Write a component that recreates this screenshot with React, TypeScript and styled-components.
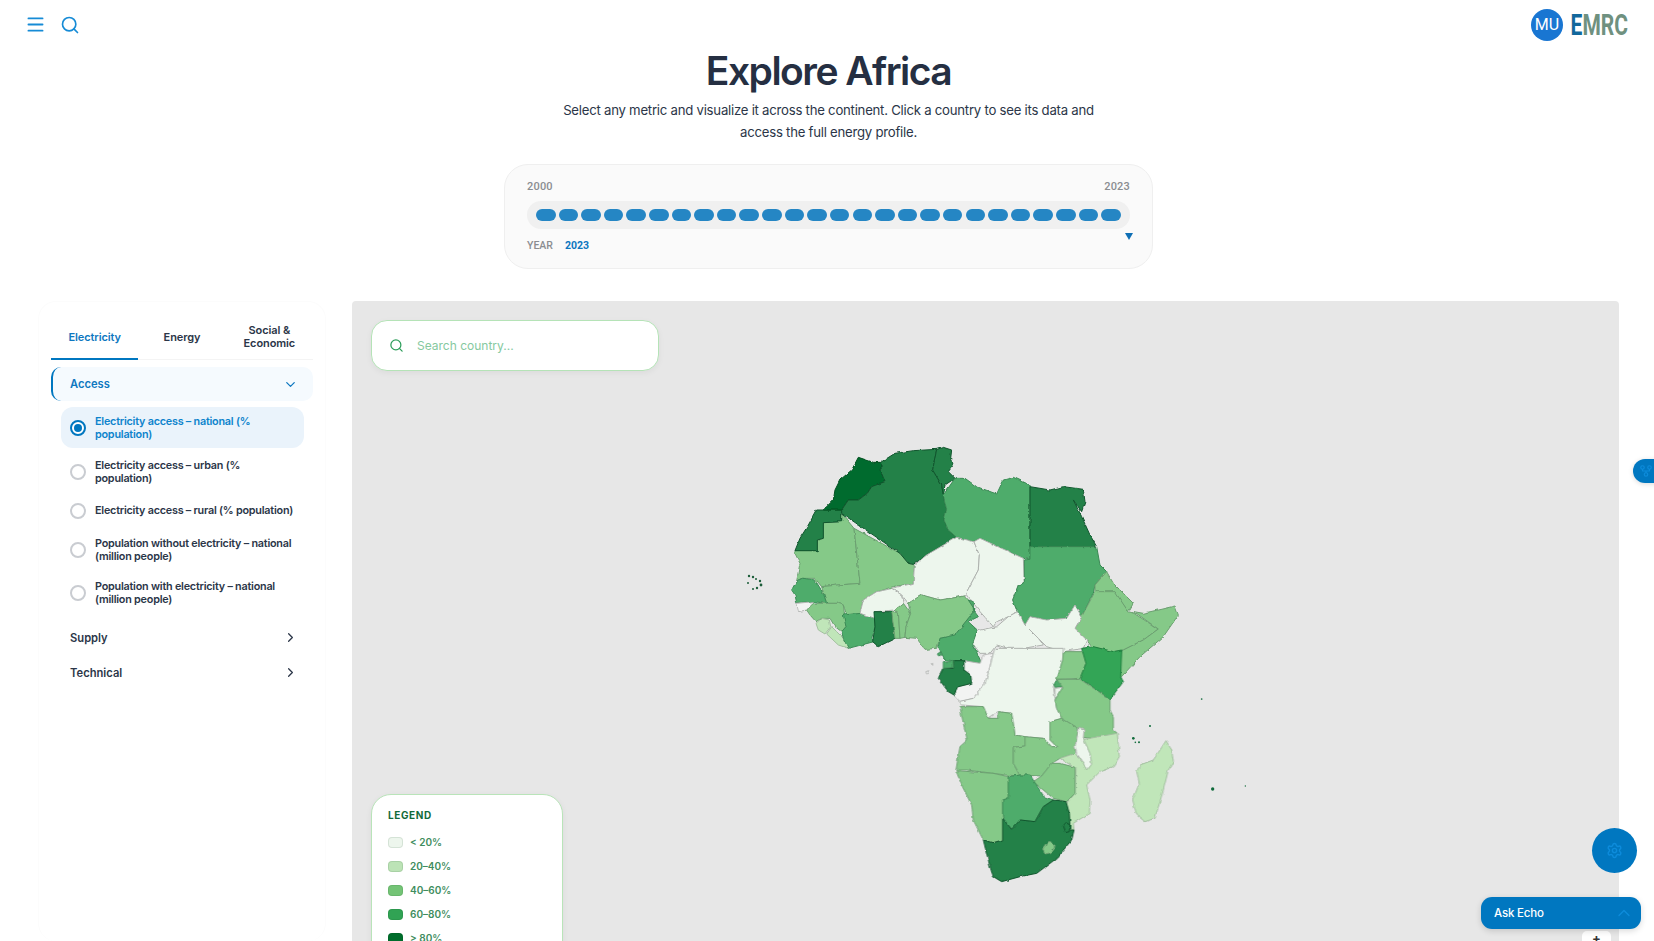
import React from "react";
import styled, { createGlobalStyle } from "styled-components";
import { Menu, Search, ChevronDown, ChevronRight, ChevronUp, Settings, GitFork } from "lucide-react";

const Global = createGlobalStyle`
  html, body { margin: 0; padding: 0; height: 100%; background: #fff; overflow: hidden; }
  body { font-family: Inter, "Noto Sans", sans-serif; color: #1f2a3c; }
  #root { height: 100%; }
`;

const Page = styled.div`
  width: 1654px; height: 941px; display: flex; flex-direction: column; overflow: hidden; position: relative;
`;
const Header = styled.header`
  height: 49px; flex: none; display: flex; align-items: center; justify-content: space-between;
  padding: 0 26px 0 25px; box-sizing: border-box;
`;
const HeaderLeft = styled.div`display: flex; align-items: center; gap: 14px; color: #168bd6; svg { display: block; }`;
const HeaderRight = styled.div`display: flex; align-items: center; gap: 7px;`;
const Avatar = styled.div`
  width: 32px; height: 32px; border-radius: 50%; background: #1976d2; color: #fff;
  display: flex; align-items: center; justify-content: center; font-size: 16px; font-family: Roboto, sans-serif;
`;
const Logo = styled.div`
  width: 58px; display: flex; justify-content: flex-end; white-space: nowrap;
  font-family: Roboto, sans-serif; font-weight: 700; font-size: 25px; color: #6f9180;
  transform: scale(.84, 1.18); transform-origin: right center;
  b { color: #12689c; font-weight: 700; }
`;
const Hero = styled.section`
  flex: none; display: flex; flex-direction: column; align-items: center; padding-left: 3px;
`;
const Title = styled.h1`
  margin: -1px 0 0; font-size: 39px; line-height: 46px; font-weight: 600; letter-spacing: -1.5px; color: #252f42;
`;
const Subtitle = styled.p`
  margin: 5px 0 0; width: 540px; text-align: center; font-size: 13.2px; line-height: 22px; color: #2b3648; letter-spacing: -.25px;
`;
const TimelineCard = styled.div`
  margin-top: 21px; width: 649px; height: 105px; box-sizing: border-box; padding: 15px 22px 0 22px;
  border: 1px solid #efefef; border-radius: 24px; background: #fafafa; position: relative;
`;
const YearEnds = styled.div`
  display: flex; justify-content: space-between; font: 500 11px/14px Roboto, sans-serif; color: #8a8d91; letter-spacing: .2px;
`;
const Track = styled.div`
  margin-top: 7px; height: 28px; border-radius: 14px; background: #f0f0f0; display: flex; align-items: center;
  justify-content: space-between; padding: 0 9px;
`;
const Pill = styled.span`width: 19.5px; height: 12px; border-radius: 6px; background: #2586c4;`;
const Marker = styled.span`
  position: absolute; right: 19px; top: 68px; width: 0; height: 0;
  border-left: 4.5px solid transparent; border-right: 4.5px solid transparent; border-top: 7px solid #0f6fb5;
`;
const YearRow = styled.div`
  margin-top: 10px; display: flex; gap: 12px; font: 500 10.5px/14px Roboto, sans-serif; color: #8a8d91;
  strong { color: #0d77c0; font-weight: 700; }
`;
const Content = styled.main`
  flex: 1; min-height: 0; margin-top: 32px; display: flex; padding: 0 35px 0 38px; gap: 26px; 
`;
const Sidebar = styled.aside`
  width: 288px; flex: none; box-sizing: border-box; padding: 14px 12px 0 12px;
  border: 1px solid #fcfcfc; border-radius: 18px; border-bottom: 0;
`;
const Tabs = styled.div`display: grid; grid-template-columns: repeat(3, 1fr); border-bottom: 1px solid #f4f4f4;`;
const Tab = styled.div<{ $active?: boolean }>`
  height: 42px; display: flex; align-items: center; justify-content: center; text-align: center; font-size: 11px; line-height: 13px;
  font-weight: 600; letter-spacing: -.1px; color: ${p => (p.$active ? "#0d77c0" : "#2b3648")};
  border-bottom: 2px solid ${p => (p.$active ? "#0077c0" : "transparent")}; margin-bottom: -1px;
`;
const GroupHead = styled.div<{ $open?: boolean }>`
  height: ${p => (p.$open ? "34px" : "35px")}; margin-top: ${p => (p.$open ? "7px" : "0")}; display: flex; align-items: center; justify-content: space-between;
  padding: 0 15px 0 ${p => (p.$open ? "17px" : "19px")}; border-radius: 10px; font-size: 11.2px; font-weight: 600;
  color: ${p => (p.$open ? "#0d77c0" : "#2b3648")};
  background: ${p => (p.$open ? "#f5fafe" : "transparent")};
  border-left: ${p => (p.$open ? "2px solid #0077c0" : "0")};
`;
const Options = styled.div`padding: 6px 9px 0 10px; margin-bottom: 6px;`;
const Option = styled.div<{ $active?: boolean; $h: number; $gap?: number }>`
  display: flex; align-items: center; gap: 9px; padding: 0 2px 0 9px; height: ${p => p.$h}px; border-radius: 12px;
  margin-top: ${p => p.$gap ?? 0}px; white-space: pre-line;
  font-size: 10.8px; line-height: 13.5px; font-weight: 600; letter-spacing: -.22px;
  color: ${p => (p.$active ? "#0d83cc" : "#2b3648")};
  background: ${p => (p.$active ? "#eaf3fb" : "transparent")};
`;
const OptionLabel = styled.span`padding-top: 1px;`;
const Radio = styled.span<{ $active?: boolean }>`
  width: 16px; height: 16px; flex: none; border-radius: 50%; box-sizing: border-box; background: #fff;
  border: 2px solid ${p => (p.$active ? "#0077c0" : "#c9ccd1")}; display: flex; align-items: center; justify-content: center;
  &::after { content: ""; width: 8px; height: 8px; border-radius: 50%; background: ${p => (p.$active ? "#0077c0" : "transparent")}; }
`;
const MapPanel = styled.section`
  flex: 1; position: relative; background: #e7e7e7; border-radius: 4px 4px 0 0; overflow: hidden;
`;
const MapSvg = styled.svg`position: absolute; left: 0; top: 0; width: 1267px; height: 640px;`;
const CountrySearch = styled.div`
  position: absolute; left: 19px; top: 19px; width: 288px; height: 51px; box-sizing: border-box; background: #fff;
  border: 1px solid #b5e3b7; border-radius: 16px; box-shadow: 0 2px 6px rgba(0,0,0,.05);
  display: flex; align-items: center; gap: 13px; padding-left: 17px; color: #2e9e5b; font-size: 12px;
  span { color: #86c9a0; }
`;
const Legend = styled.div`
  position: absolute; left: 19px; top: 493px; width: 192px; height: 200px; box-sizing: border-box; background: #fff;
  border: 1.5px solid #b9e4b9; border-radius: 20px; padding: 14px 16px; box-shadow: 0 2px 6px rgba(0,0,0,.06);
`;
const LegendTitle = styled.div`font-size: 10px; line-height: 13px; font-weight: 700; letter-spacing: .6px; color: #116b3a; margin-bottom: 8px;`;
const LegendRow = styled.div`
  height: 24px; display: flex; align-items: center; gap: 7px; font-size: 10px; font-weight: 600; color: #408d5e;
`;
const Swatch = styled.span<{ $c: string }>`
  width: 15px; height: 11px; border-radius: 4px; background: ${p => p.$c}; box-shadow: inset 0 0 0 1px rgba(0,60,20,.1);
`;
const GearButton = styled.div`
  position: absolute; left: 1592px; top: 828px; width: 45px; height: 45px; border-radius: 50%; background: #0077c0;
  display: flex; align-items: center; justify-content: center; color: #0d8cdb;
`;
const EchoBar = styled.div`
  position: absolute; left: 1481px; top: 897px; width: 160px; height: 32px; box-sizing: border-box; border-radius: 11px; background: #0077c0;
  display: flex; align-items: center; justify-content: space-between; padding: 0 7px 0 13px; color: #fff; font-size: 11.5px; font-weight: 500;
  letter-spacing: -.2px; box-shadow: 0 2px 6px rgba(0,0,0,.15); svg { color: #0d8cdb; }
`;
const ZoomKey = styled.div`
  position: absolute; left: 1582px; top: 931px; width: 29px; height: 30px; border-radius: 5px; background: #fff; color: #333;
  text-align: center; font-size: 13px; line-height: 14px; font-weight: 700;
`;
const SideTab = styled.div`
  position: absolute; left: 1633px; top: 459px; width: 30px; height: 24px; border-radius: 12px 0 0 12px; background: #0077c0;
  display: flex; align-items: center; padding-left: 6px; box-sizing: border-box; color: #0d8cdb; box-shadow: 0 1px 5px rgba(0,0,0,.15);
`;

const C = {
  a: ["#edf6ed", "#aeb2ae"], b: ["#c0e6b9", "#a3bfa0"], c: ["#85c988", "#6b9f70"], d: ["#4eac6b", "#3b8a55"],
  k: ["#33a556", "#1f7f3e"], e: ["#238148", "#10552d"], f: ["#006b2e", "#00501f"], w: ["#f2f3f2", "#b4b6b4"],
};
type Poly = [keyof typeof C, string];

const north: Poly[] = [
  ["c", "45,362 112,362 112,330 130,325 130,278 185,275 185,250 222,295 240,460 175,465 125,470 105,445 70,445 50,450 60,400 45,370"],
  ["c", "222,295 360,370 385,400 403,405 400,460 340,470 290,485 250,510 240,550 200,555 190,525 175,520 140,520 125,470 175,465 240,460"],
  ["e", "110,240 185,240 185,275 130,278 130,325 112,330 112,362 45,362 60,325 85,285"],
  ["f", "130,240 160,210 165,180 180,150 215,120 235,82 280,97 302,97 305,130 315,155 275,170 262,190 235,210 205,210 185,240"],
  ["e", "302,97 345,70 400,62 470,58 458,120 485,165 490,195 500,240 492,270 505,300 530,322 440,375 400,403 385,400 360,370 185,250 185,240 205,210 235,210 262,190 275,170 315,155 305,130"],
  ["e", "470,58 490,52 515,60 512,85 520,105 505,125 525,145 495,165 490,195 485,165 458,120"],
  ["d", "525,145 555,145 590,170 650,192 670,150 700,142 750,165 750,388 730,385 600,325 580,335 530,322 505,300 492,270 500,240 490,195"],
  ["e", "750,170 810,180 850,170 910,178 915,215 905,245 880,210 905,260 930,315 950,350 750,350"],
  ["a", "530,322 582,335 598,375 595,420 558,490 555,498 480,510 425,495 385,520 365,495 335,475 400,460 403,405 440,375"],
  ["a", "582,335 600,325 730,385 733,460 715,465 698,510 712,545 685,560 650,575 640,590 600,545 558,490 595,420 598,375"],
  ["d", "733,390 750,388 750,350 950,350 960,405 980,425 945,465 940,490 905,560 885,525 860,565 800,570 750,560 735,585 712,545 698,510 715,465 733,460"],
  ["c", "980,425 1000,460 1030,490 1060,520 1045,545 1005,490 945,490 945,465"],
  ["c", "945,485 1005,485 1045,545 1062,550 1135,597 1090,630 1030,660 1000,665 935,650 920,630 885,595 905,560"],
  ["c", "1062,545 1090,550 1185,528 1195,555 1150,620 1080,680 1020,745 1020,665 1030,660 1090,630 1135,597"],
  ["a", "735,585 750,560 800,570 860,565 885,525 905,560 885,595 920,630 910,655 850,665 800,650 775,625"],
  ["a", "578,620 600,600 650,590 685,560 712,545 735,585 775,625 790,645 700,660 650,645 630,670 600,670 578,640"],
  ["d", "35,480 50,452 70,445 105,450 130,490 140,520 100,515 50,518 45,495"],
  ["w", "50,520 100,515 95,530 80,540 55,545"],
  ["c", "80,540 100,520 140,520 175,520 190,525 198,590 185,605 165,590 150,565 125,565 108,575 90,555"],
  ["b", "108,580 125,565 148,570 152,590 135,612 115,600"],
  ["b", "140,612 155,590 170,605 190,625 205,655 175,645"],
  ["d", "190,555 240,550 285,565 285,590 275,625 282,635 205,655 190,625 185,605 198,590"],
  ["a", "240,550 250,510 290,485 335,475 365,495 370,520 345,540 285,545 285,565"],
  ["e", "282,545 335,545 345,625 295,650 278,635 285,590"],
  ["c", "335,545 355,545 360,625 345,625"],
  ["c", "345,540 370,520 392,550 378,590 375,622 360,625 355,545"],
  ["c", "385,520 425,495 480,510 555,498 565,510 585,540 545,590 525,615 480,625 470,655 435,658 410,625 375,622 378,590 392,550"],
  ["d", "565,510 580,515 580,540 595,560 565,575 592,600 578,640 605,700 560,695 495,690 475,650 480,625 525,615 545,590 585,540"],
];
const south: Poly[] = [
  ["w", "252,32 300,40 310,15 340,10 325,70 315,100 280,145 240,155 222,135 235,110 275,100 272,75 252,60"],
  ["e", "222,32 252,32 252,60 272,75 275,100 235,110 222,135 205,125 175,85 190,55 220,55"],
  ["d", "190,35 220,35 220,52 190,55"],
  ["a", "345,-5 550,-5 548,30 530,90 520,110 530,175 545,205 510,215 510,270 530,290 515,290 490,265 435,260 405,255 395,190 355,185 325,205 310,170 245,165 235,155 280,145 315,100 325,70 340,10"],
  ["c", "550,5 612,5 618,40 600,85 530,88 548,30"],
  ["k", "605,-5 640,-10 700,5 725,0 722,80 730,95 690,148 600,85 618,40"],
  ["d", "520,100 535,88 552,92 548,110 525,112"],
  ["a", "525,115 548,112 530,145 525,140"],
  ["c", "530,88 600,88 690,148 690,180 700,200 700,240 712,250 650,268 610,262 595,235 545,205 530,175 525,150 548,112"],
  ["c", "240,170 310,170 325,205 355,205 355,185 395,190 405,255 435,260 435,288 400,292 400,340 420,378 375,375 340,370 260,360 228,360 240,290 262,270 250,220"],
  ["c", "510,215 545,205 595,235 585,310 540,325 515,340 485,378 420,375 400,340 400,292 435,288 435,260 490,265 515,290 530,290 510,270"],
  ["a", "597,235 612,240 610,265 630,310 635,340 620,360 610,340 590,310 585,290"],
  ["b", "612,268 712,250 718,320 700,350 660,365 620,405 630,450 628,490 580,520 582,540 570,540 570,515 560,460 585,430 588,355 540,325 585,310 610,340 620,360 635,340 630,310 610,265"],
  ["c", "515,340 540,340 585,352 585,430 560,455 520,445 460,395 485,378"],
  ["c", "228,362 340,370 385,380 385,445 368,450 368,570 340,578 310,570 280,510 275,465 245,405"],
  ["d", "385,380 420,375 450,375 492,440 520,450 490,470 465,515 420,510 395,538 380,520 368,500 368,450 385,445"],
  ["e", "368,505 380,520 395,538 420,510 465,515 490,470 520,450 558,455 568,490 570,540 582,540 575,570 530,625 470,670 420,680 365,695 340,680 330,650 310,570 340,578 368,570"],
  ["e", "548,530 558,518 570,525 568,545 555,548"],
  ["c", "488,597 505,575 515,575 525,590 512,608 497,612"],
  ["b", "858,272 875,300 880,335 865,360 850,420 825,505 795,515 770,495 758,450 778,400 770,365 780,345 820,330 840,300"],
  ["d", "172,12 182,5 184,14 176,18"],
  ["w", "138,65 146,62 146,70 140,72"],
  ["w", "153,42 158,40 158,46"],
];
const dots: [number, number, number][] = [
  [760, 265, 4], [766, 277, 2.5], [777, 277, 3], [810, 228, 3], [965, 147, 2.5], [998, 417, 5], [1096, 408, 2],
];
const capeVerde: [number, number, number][] = [
  [749, 576, 1.2], [753, 577, 1.2], [756, 579, 1], [760, 581, 1.2], [761, 585, 1.4], [757, 588, 1.2], [753, 589, 1], [748, 583, 1],
];

const MapArt = () => (
  <MapSvg viewBox="352 301 1267 640" aria-hidden>
    <defs>
      <filter id="rough" x="352" y="301" width="1267" height="640" filterUnits="userSpaceOnUse" colorInterpolationFilters="sRGB">
        <feTurbulence type="fractalNoise" baseFrequency="0.16" numOctaves={2} seed={4} result="n" />
        <feDisplacementMap in="SourceGraphic" in2="n" scale={3} xChannelSelector="R" yChannelSelector="G" />
      </filter>
    </defs>
    <g filter="url(#rough)">
      <g transform="translate(780 430) scale(.33333)" strokeLinejoin="round">
        {north.map(([k, p], i) => (
          <polygon key={i} points={p} fill={C[k][0]} stroke={C[k][1]} strokeWidth={1} vectorEffect="non-scaling-stroke" />
        ))}
      </g>
      <g transform="translate(880 650) scale(.33333)" strokeLinejoin="round">
        {south.map(([k, p], i) => (
          <polygon key={i} points={p} fill={C[k][0]} stroke={C[k][1]} strokeWidth={1} vectorEffect="non-scaling-stroke" />
        ))}
      </g>
    </g>
    <g transform="translate(880 650) scale(.33333)">
      {dots.map(([x, y, r], i) => <circle key={i} cx={x} cy={y} r={r} fill="#0f6a3a" />)}
    </g>
    {capeVerde.map(([x, y, r], i) => <circle key={i} cx={x} cy={y} r={r} fill="#1c5e3a" />)}
  </MapSvg>
);

const years = Array.from({ length: 26 });
const options = [
  { label: "Electricity access – national (%\npopulation)", active: true, h: 41 },
  { label: "Electricity access – urban (%\npopulation)", h: 43, gap: 2 },
  { label: "Electricity access – rural (% population)", h: 35 },
  { label: "Population without electricity – national\n(million people)", h: 43 },
  { label: "Population with electricity – national\n(million people)", h: 43 },
];
const legend: [string, string][] = [
  ["#edf6ed", "< 20%"], ["#bce3b6", "20–40%"], ["#74c476", "40–60%"], ["#31a354", "60–80%"], ["#006d2c", "> 80%"],
];

export default function App() {
  return (
    <Page>
      <Global />
      <Header>
        <HeaderLeft>
          <Menu size={21} strokeWidth={2.2} />
          <Search size={20} strokeWidth={2} />
        </HeaderLeft>
        <HeaderRight>
          <Avatar>MU</Avatar>
          <Logo><b>E</b>MRC</Logo>
        </HeaderRight>
      </Header>
      <Hero>
        <Title>Explore Africa</Title>
        <Subtitle>Select any metric and visualize it across the continent. Click a country to see its data and access the full energy profile.</Subtitle>
        <TimelineCard>
          <YearEnds><span>2000</span><span>2023</span></YearEnds>
          <Track>{years.map((_, i) => <Pill key={i} />)}</Track>
          <Marker />
          <YearRow><span>YEAR</span><strong>2023</strong></YearRow>
        </TimelineCard>
      </Hero>
      <Content>
        <Sidebar>
          <Tabs>
            <Tab $active>Electricity</Tab>
            <Tab>Energy</Tab>
            <Tab>Social &<br />Economic</Tab>
          </Tabs>
          <GroupHead $open>Access<ChevronDown size={15} /></GroupHead>
          <Options>
            {options.map(o => (
              <Option key={o.label} $active={o.active} $h={o.h} $gap={o.gap}>
                <Radio $active={o.active} />
                <OptionLabel>{o.label}</OptionLabel>
              </Option>
            ))}
          </Options>
          <GroupHead>Supply<ChevronRight size={15} /></GroupHead>
          <GroupHead>Technical<ChevronRight size={15} /></GroupHead>
        </Sidebar>
        <MapPanel>
          <MapArt />
          <CountrySearch><Search size={15} /><span>Search country...</span></CountrySearch>
          <Legend>
            <LegendTitle>LEGEND</LegendTitle>
            {legend.map(([c, l]) => <LegendRow key={l}><Swatch $c={c} />{l}</LegendRow>)}
          </Legend>
        </MapPanel>
      </Content>
      <SideTab><GitFork size={14} /></SideTab>
      <GearButton><Settings size={17} /></GearButton>
      <ZoomKey>+</ZoomKey>
      <EchoBar>Ask Echo<ChevronUp size={20} strokeWidth={1.5} /></EchoBar>
    </Page>
  );
}
